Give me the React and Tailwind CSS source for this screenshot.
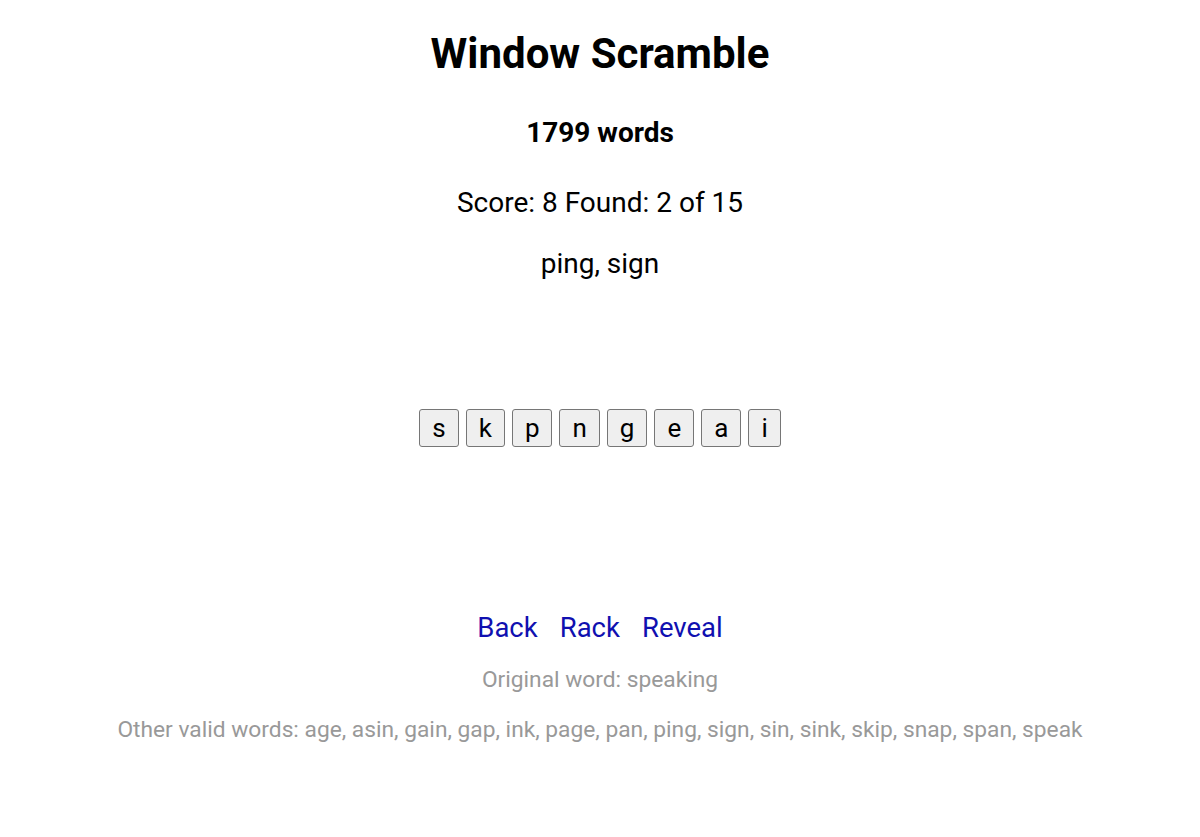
import React from "react";

const letters = ["s", "k", "p", "n", "g", "e", "a", "i"];
const others = ["age", "asin", "gain", "gap", "ink", "page", "pan", "ping", "sign", "sin", "sink", "skip", "snap", "span", "speak"];

export default function App() {
  return (
    <div className="min-h-screen bg-white text-black text-center font-['Roboto',sans-serif]">
      <h1 className="pt-[28px] text-[42px] leading-[52px] font-bold">Window Scramble</h1>
      <h2 className="mt-[36px] text-[28px] leading-[34px] font-bold">1799 words</h2>
      <div className="mt-[36px] text-[28px] leading-[34px]">Score: 8 Found: 2 of 15</div>
      <div className="mt-[27px] text-[28px] leading-[34px]">ping, sign</div>

      <div className="mt-[128px] flex justify-center gap-[7px]">
        {letters.map((l, i) => (
          <button
            key={i}
            className="h-[38px] px-[12px] bg-[#efefef] border border-[#767676] rounded-[3px] text-[26px] leading-[30px]"
          >
            {l}
          </button>
        ))}
      </div>

      <div className="mt-[164px] flex justify-center gap-[22px] text-[27.5px] leading-[34px] text-[#1010b0]">
        <a href="#">Back</a>
        <a href="#">Rack</a>
        <a href="#">Reveal</a>
      </div>
      <div className="mt-[21px] text-[22.75px] leading-[28px] text-[#999999]">Original word: speaking</div>
      <div className="mt-[22px] text-[22.75px] leading-[28px] text-[#999999]">
        Other valid words: {others.join(", ")}
      </div>
    </div>
  );
}
